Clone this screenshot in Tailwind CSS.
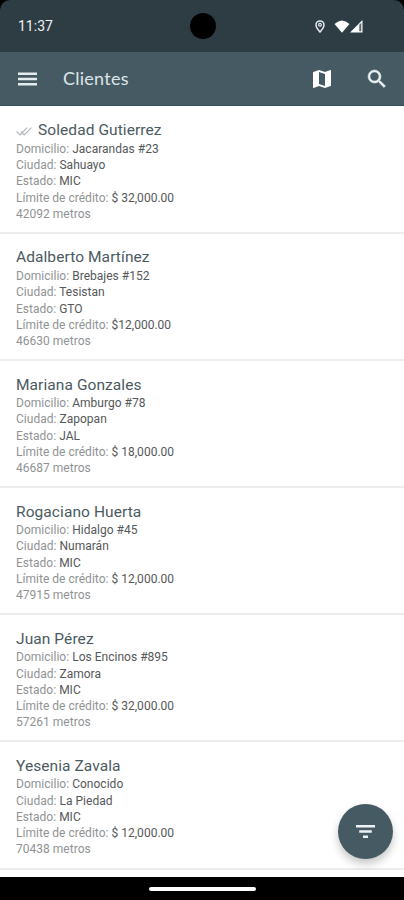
<!DOCTYPE html>
<html lang="es">
<head>
  <meta charset="UTF-8">
  <meta name="viewport" content="width=device-width, initial-scale=1.0">
  <title>Clientes</title>
  <script src="https://cdn.jsdelivr.net/npm/@tailwindcss/browser@4"></script>
</head>
<body class="bg-black font-['Roboto',sans-serif]">
  <div class="relative flex flex-col w-[404px] h-[900px] overflow-hidden">

    <!-- Status bar -->
    <div class="relative flex items-center justify-between h-[52px] pl-[18px] pr-[41px] bg-[#2e3c43] rounded-t-[10px] shrink-0">
      <span class="mt-px text-[14px] text-[#eef2f4]">11:37</span>
      <div class="absolute left-[190px] top-[13px] size-[26px] rounded-full bg-black"></div>
      <div class="flex items-center">
        <svg class="w-[10px] h-[13px] mr-[9px]" viewBox="0 0 10 13" fill="none" stroke="#e6ecef">
          <path d="M5 12C2.500 9 1 7 1 4.900a4 4 0 0 1 8 0C9 7 7.500 9 5 12z" stroke-width="1.500"/>
          <circle cx="5" cy="4.800" r="1.400" stroke-width="1.200"/>
        </svg>
        <svg class="w-[16px] h-[13px]" viewBox="0 0 16 13" fill="#fff">
          <path d="M8 12.800.500 4Q8-3 15.500 4z"/>
        </svg>
        <svg class="w-[13px] h-[13px]" viewBox="0 0 13 13">
          <path d="M0 12.500 12.500 0v12.500z" fill="#fff"/>
          <path d="M9.300 4.700 11.300 2.700v8.500H9.300z" fill="#59666d"/>
        </svg>
      </div>
    </div>

    <!-- App bar -->
    <div class="flex items-center h-[54px] pl-[18px] pr-[15px] bg-[#465a63] border-b border-[#34505a] shrink-0">
      <svg class="w-[20px] h-[14px]" viewBox="0 0 20 14" fill="#e4ecef">
        <path d="M0 .500h19v2.500H0zM0 5.700h19v2.500H0zM0 11h19v2.500H0z"/>
      </svg>
      <h1 class="ml-[25px] text-[18px] tracking-[0.25px] font-['Lato',sans-serif] text-[#dce6ea]">Clientes</h1>
      <svg class="size-[24px] ml-auto" viewBox="0 0 24 24" fill="#fff">
        <path d="m20.500 3-.160.030L15 5.100 9 3 3.360 4.900c-.210.070-.360.250-.360.480V20.500c0 .280.220.500.500.500l.160-.030L9 18.900l6 2.100 5.640-1.900c.210-.070.360-.250.360-.480V3.500c0-.280-.220-.500-.500-.500zM15 19l-6-2.110V5l6 2.110V19z"/>
      </svg>
      <svg class="size-[24px] ml-[31px]" viewBox="0 0 24 24" fill="#e9f0f2" stroke="#e9f0f2" stroke-width="0.500">
        <path d="M15.500 14h-.790l-.280-.270A6.470 6.470 0 0 0 16 9.500 6.500 6.500 0 1 0 9.500 16c1.610 0 3.090-.590 4.230-1.570l.270.280v.790l5 4.990L20.490 19l-4.990-5zm-6 0C7.010 14 5 11.990 5 9.500S7.010 5 9.500 5 14 7.010 14 9.500 11.990 14 9.500 14z"/>
      </svg>
    </div>

    <!-- Client list -->
    <div id="clients" class="flex-1 overflow-hidden pt-px bg-white"></div>

    <!-- Navigation bar -->
    <div class="flex items-center justify-center h-[23px] bg-black shrink-0">
      <div class="w-[107px] h-[4px] rounded-full bg-white"></div>
    </div>

    <!-- Filter button -->
    <button class="absolute left-[338px] top-[804px] flex items-center justify-center size-[55px] rounded-full bg-[#465a63] shadow-[0_5px_8px_rgba(0,0,0,0.22)]">
      <svg class="w-[19px] h-[13px]" viewBox="0 0 19 13" fill="#eef2f4">
        <path d="M0 0h19v2.400H0zM3.200 5.300h12.600v2.400H3.200zM7 10.600h5V13H7z"/>
      </svg>
    </button>
  </div>

  <script>
    const clients = [
      { name: "Soledad Gutierrez", address: "Jacarandas #23", city: "Sahuayo", state: "MIC", credit: "$ 32,000.00", distance: 42092, checked: true },
      { name: "Adalberto Martínez", address: "Brebajes #152", city: "Tesistan", state: "GTO", credit: "$12,000.00", distance: 46630 },
      { name: "Mariana Gonzales", address: "Amburgo #78", city: "Zapopan", state: "JAL", credit: "$ 18,000.00", distance: 46687 },
      { name: "Rogaciano Huerta", address: "Hidalgo #45", city: "Numarán", state: "MIC", credit: "$ 12,000.00", distance: 47915 },
      { name: "Juan Pérez", address: "Los Encinos #895", city: "Zamora", state: "MIC", credit: "$ 32,000.00", distance: 57261 },
      { name: "Yesenia Zavala", address: "Conocido", city: "La Piedad", state: "MIC", credit: "$ 12,000.00", distance: 70438 }
    ];

    const checkIcon = `
      <svg class="w-[16px] h-[9px] mr-[6px]" viewBox="0 0 16 9" fill="none" stroke="#b4b9bb" stroke-width="1.200">
        <path d="M.500 4.500 4 8l2-2M5 4.500 8.200 8 15.500.700M6.500 5.500 11 .700"/>
      </svg>`;

    function line(label, value) {
      return `<p>${label}: <span class="text-[#55585a]">${value}</span></p>`;
    }

    document.getElementById("clients").innerHTML = clients.map(c => `
      <div class="h-[127.100px] px-4 pt-[14px] border-b-2 border-[#ececec]">
        <h2 class="flex items-center h-[20px] text-[15.500px] tracking-[0.08px] text-[#4b5a61]">${c.checked ? checkIcon : ""}${c.name}</h2>
        <div class="text-[12px] leading-[16.200px] tracking-[0.02px] text-[#909395]">
          ${line("Domicilio", c.address)}
          ${line("Ciudad", c.city)}
          ${line("Estado", c.state)}
          ${line("Límite de crédito", c.credit)}
          <p>${c.distance} metros</p>
        </div>
      </div>`).join("");
  </script>
</body>
</html>
